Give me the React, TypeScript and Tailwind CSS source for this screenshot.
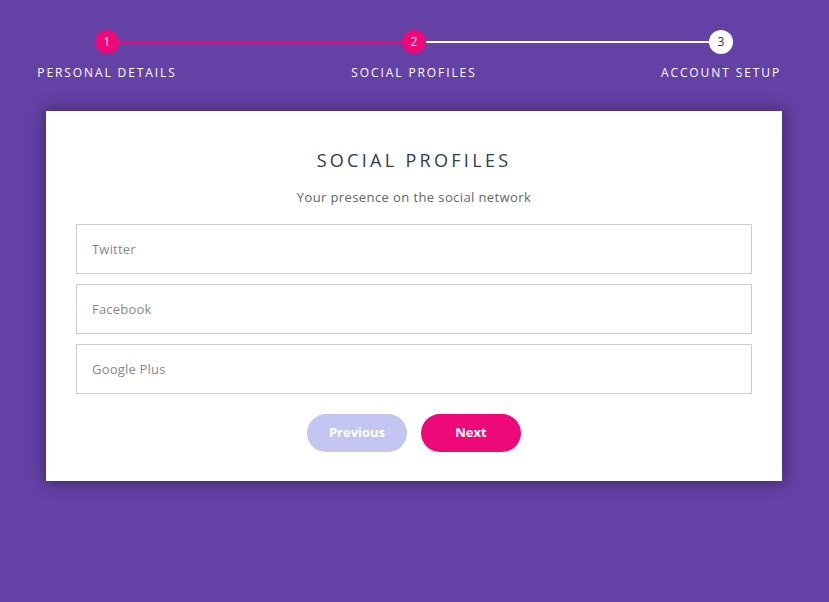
import React from "react";

const font = { fontFamily: '"Open Sans", "Noto Sans", sans-serif' };

function Step({ n, active }: { n: number; active: boolean }) {
  return (
    <div
      className={
        active
          ? "w-6 h-6 rounded-full bg-[#ee0979] text-white text-[12px] flex items-center justify-center shrink-0"
          : "w-6 h-6 rounded-full bg-white text-[#333] text-[12px] flex items-center justify-center shrink-0"
      }
    >
      {n}
    </div>
  );
}

export default function App() {
  return (
    <div className="w-[829px] h-[602px] bg-[#6441a5] pt-[30px] overflow-hidden" style={font}>
      <div className="flex items-center pl-[95px] pr-[96px]">
        <Step n={1} active />
        <div className="flex-1 h-[2px] bg-[#ee0979]" />
        <Step n={2} active />
        <div className="flex-1 h-[2px] bg-white" />
        <Step n={3} active={false} />
      </div>
      <div className="flex justify-between pl-[27px] pr-[28px] mt-[11px] text-white text-[12px] leading-[16px] tracking-[1.9px] uppercase">
        <div className="w-[160px] text-center">Personal Details</div>
        <div className="w-[160px] text-center">Social Profiles</div>
        <div className="w-[160px] text-center">Account Setup</div>
      </div>
      <div className="ml-[46px] mr-[47px] mt-[30px] bg-white shadow-[0_0_15px_1px_rgba(0,0,0,0.4)] px-[30px] pt-[36px] pb-[29px]">
        <h2 className="text-center text-[18px] leading-[27px] tracking-[3.3px] text-[#2c3e50] uppercase">
          Social Profiles
        </h2>
        <p className="text-center text-[13px] leading-[20px] tracking-[0.4px] text-[#666] mt-[13px]">
          Your presence on the social network
        </p>
        <div className="flex flex-col gap-[10px] mt-[17px]">
          {["Twitter", "Facebook", "Google Plus"].map((p) => (
            <input
              key={p}
              placeholder={p}
              className="h-[50px] w-full border border-[#ccc] px-[15px] text-[13px] tracking-[0.2px] text-[#2c3e50] placeholder:text-[#888] outline-none"
              style={font}
            />
          ))}
        </div>
        <div className="flex justify-center gap-[14px] mt-[20px]">
          <button className="w-[100px] h-[38px] rounded-full bg-[#c5c5f1] text-white text-[13px] font-bold">
            Previous
          </button>
          <button className="w-[100px] h-[38px] rounded-full bg-[#ee0979] text-white text-[13px] font-bold">
            Next
          </button>
        </div>
      </div>
    </div>
  );
}
